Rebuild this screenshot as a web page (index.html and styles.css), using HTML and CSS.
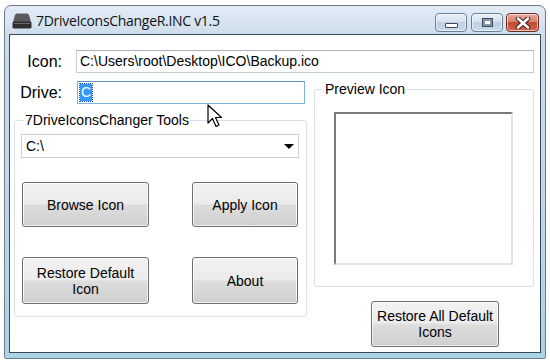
FILE: index.html
```html
<!DOCTYPE html>
<html lang="en">
<head>
  <meta charset="UTF-8" />
  <title>7DriveIconsChangeR.INC v1.5</title>
  <link rel="stylesheet" href="styles.css">
</head>
<body>

<div class="window">
  <div class="titlebar">
    <svg class="app-icon" width="20" height="16" viewBox="0 0 20 16">
      <path d="M3 2 Q3.5 0.5 5 0.5 H15 Q16.5 0.5 17 2 L19 9 H1 Z" fill="#5a5a5a"/>
      <rect x="0.5" y="8.5" width="19" height="7" rx="1.5" fill="#2f2f2f"/>
      <rect x="2" y="10" width="16" height="1" fill="#6a6a6a"/>
    </svg>
    <span class="title">7DriveIconsChangeR.INC v1.5</span>
    <div class="caption-btns">
      <span class="cap cap-min"><i></i></span>
      <span class="cap cap-max"><i></i></span>
      <span class="cap cap-close">
        <svg width="16" height="12" viewBox="0 0 16 12">
          <path d="M3 1.5 L13 10.5 M13 1.5 L3 10.5" stroke="#3a1a1a" stroke-width="4.5" stroke-linecap="round"/>
          <path d="M3 1.5 L13 10.5 M13 1.5 L3 10.5" stroke="#ffffff" stroke-width="2.6" stroke-linecap="round"/>
        </svg>
      </span>
    </div>
  </div>

  <div class="client">
    <div class="icon-row">
      <label class="lbl">Icon:</label>
      <div class="field wide">C:\Users\root\Desktop\ICO\Backup.ico</div>
    </div>

    <div class="main">
      <div class="left">
        <div class="drive-row">
          <label class="lbl">Drive:</label>
          <div class="field focus"><span class="sel">C</span></div>
        </div>

        <fieldset class="group tools">
          <legend>7DriveIconsChanger Tools</legend>
          <div class="combo"><span>C:\</span><i class="arrow"></i></div>
          <div class="btn-grid">
            <button class="btn">Browse Icon</button>
            <button class="btn">Apply Icon</button>
            <button class="btn tall">Restore Default<br>Icon</button>
            <button class="btn tall">About</button>
          </div>
        </fieldset>
      </div>

      <div class="right">
        <fieldset class="group preview">
          <legend>Preview Icon</legend>
          <div class="preview-box"></div>
        </fieldset>
        <button class="btn restore-all">Restore All Default<br>Icons</button>
      </div>
    </div>

    <!-- mouse pointer over the form -->
    <svg class="cursor" width="16" height="25" viewBox="0 0 16 25">
      <path d="M1 1 L1 19 L5.5 14.5 L9 22.5 L12 21 L8.5 13.5 L14.5 13.5 Z" fill="#ffffff" stroke="#000" stroke-width="1.2" stroke-linejoin="round"/>
    </svg>
  </div>
</div>

</body>
</html>
```

FILE: styles.css
```css
* {
  box-sizing: border-box;
}

body {
  margin: 0;
  background: #ffffff;
  font-family: "Liberation Sans", Arial, sans-serif;
  color: #000;
}

.window {
  margin: 5px 0 0 4px;
  width: 542px;
  height: 354px;
  padding: 0 4px 5px 4px;
  border: 1px solid #6d7d8e;
  border-radius: 7px 7px 2px 2px;
  background: linear-gradient(#e3ecf6, #cddcec 30px, #bdd5ea 60%, #a9d4e8);
  display: flex;
  flex-direction: column;
}

/* title bar */
.titlebar {
  height: 28px;
  display: flex;
  align-items: center;
  padding-left: 3px;
  flex-shrink: 0;
}

.app-icon {
  margin-top: 2px;
}

.title {
  margin-left: 4px;
  font-family: "Open Sans", "Noto Sans", sans-serif;
  font-size: 14px;
  letter-spacing: -0.3px;
  color: #111;
  margin-top: 1px;
}

.caption-btns {
  margin-left: auto;
  margin-right: 2px;
  margin-top: 5px;
  display: flex;
  gap: 4px;
}

.cap {
  width: 32px;
  height: 19px;
  border: 1px solid #6b7f98;
  border-radius: 4px;
  background: linear-gradient(#e8f0f8, #d5e2ef 45%, #bccfe3 50%, #c9dbec);
  box-shadow: inset 0 0 0 1px rgba(255, 255, 255, 0.6);
  display: flex;
  align-items: center;
  justify-content: center;
}

.cap-min i {
  display: block;
  width: 13px;
  height: 5px;
  margin-top: 6px;
  background: #fff;
  border: 1px solid #3e4a58;
  border-radius: 1px;
}

.cap-max i {
  display: block;
  width: 11px;
  height: 9px;
  border: 1px solid #3e4a58;
  background: #fff;
  box-shadow: inset 0 0 0 2px #8497ad;
}

.cap-close {
  width: 33px;
  margin-left: -1px;
  border-color: #6a2a22;
  background: linear-gradient(#e9a99c, #d7806f 45%, #c24b32 50%, #d5634b);
}

/* client area */
.client {
  position: relative;
  flex: 1;
  background: #ffffff;
  border: 1px solid #3a4756;
}

.lbl {
  font-size: 16px;
  text-align: right;
}

.field {
  height: 23px;
  border: 1px solid #c4ccd6;
  border-top-color: #a9b2bd;
  background: #fff;
  font-size: 14px;
  line-height: 21px;
  padding-left: 3px;
  white-space: nowrap;
}

.icon-row {
  display: flex;
  align-items: center;
  margin-top: 15px;
}

.icon-row .lbl {
  width: 66px;
  padding-right: 14px;
}

.field.wide {
  width: 458px;
}

.main {
  display: flex;
  margin-top: 8px;
}

.left {
  width: 297px;
}

.drive-row {
  display: flex;
  align-items: center;
}

.drive-row .lbl {
  width: 67px;
  padding-right: 15px;
}

.field.focus {
  width: 228px;
  border-color: #7fb2dc;
  border-top-color: #5a93c4;
  padding-left: 2px;
}

.sel {
  display: inline-block;
  background: #3399ff;
  color: #fff;
  line-height: 17px;
  padding: 0 1px;
  outline: 1px dotted #1a4f8a;
}

/* group boxes */
.group {
  margin: 0;
  padding: 0;
  border: 1px solid #d9e1e8;
  border-radius: 3px;
}

.group legend {
  font-size: 14px;
  line-height: 16px;
  padding: 0 1px;
  margin-left: 9px;
}

.tools {
  margin: 8px 0 0 4px;
  width: 293px;
  padding-bottom: 12px;
}

.combo {
  height: 24px;
  margin: 6px 7px 0 6px;
  border: 1px solid #c9d2dc;
  background: #fff;
  font-size: 14px;
  line-height: 22px;
  padding-left: 4px;
  display: flex;
  align-items: center;
}

.arrow {
  margin-left: auto;
  margin-right: 4px;
  width: 0;
  height: 0;
  border-left: 5px solid transparent;
  border-right: 5px solid transparent;
  border-top: 5px solid #000;
}

.btn-grid {
  display: grid;
  grid-template-columns: 127px 106px;
  justify-content: space-between;
  row-gap: 30px;
  margin: 24px 8px 0 7px;
}

.btn {
  height: 45px;
  border: 1px solid #707070;
  border-radius: 3px;
  background: linear-gradient(#f2f2f2, #ebebeb 48%, #dddddd 52%, #cfcfcf);
  box-shadow: inset 0 0 0 1px rgba(255, 255, 255, 0.7);
  font-family: "Liberation Sans", Arial, sans-serif;
  font-size: 14px;
  line-height: 16px;
  color: #000;
  padding: 0;
}

.btn.tall {
  height: 47px;
}

.right {
  margin-left: 7px;
  width: 220px;
  display: flex;
  flex-direction: column;
}

.preview {
  width: 220px;
  padding-bottom: 21px;
}

.preview-box {
  margin: 15px 0 0 19px;
  width: 179px;
  height: 153px;
  border: 2px solid #e4e4e4;
  border-top-color: #7a7a7a;
  border-left-color: #7a7a7a;
  background: #fff;
}

.restore-all {
  margin: 14px 0 0 57px;
  width: 128px;
  height: 46px;
}

.cursor {
  position: absolute;
  left: 197px;
  top: 69px;
}
```
